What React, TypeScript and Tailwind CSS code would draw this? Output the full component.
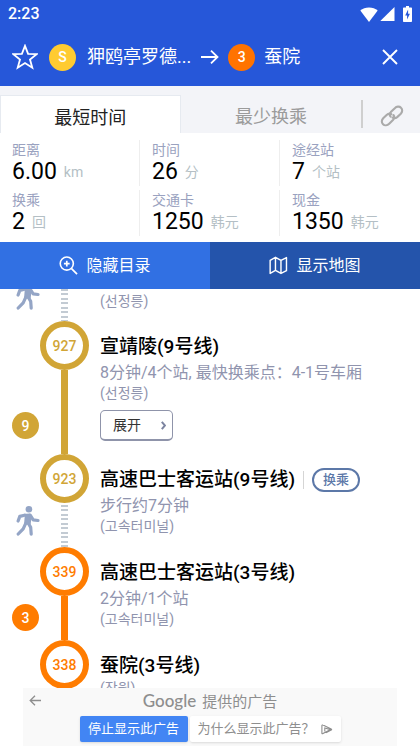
import { clsx } from "clsx";

const WifiIcon = () => (
  <svg width="18" height="15" viewBox="0 0 18 15" fill="currentColor" aria-label="Wi-Fi">
    <path d="M9 15L0.3 3.6C2.6 1.6 5.6 0.4 9 0.4C12.4 0.4 15.4 1.6 17.7 3.6L9 15Z" />
  </svg>
);

const SignalIcon = () => (
  <svg width="15" height="14" viewBox="0 0 15 14" fill="currentColor" aria-label="Signal">
    <path d="M14.5 0V14H0.3L14.5 0Z" />
  </svg>
);

const BatteryIcon = () => (
  <svg width="9" height="16" viewBox="0 0 9 16" aria-label="Battery">
    <path
      d="M3 0H6V1.6H8C8.6 1.6 9 2 9 2.6V15C9 15.6 8.6 16 8 16H1C0.4 16 0 15.6 0 15V2.6C0 2 0.4 1.6 1 1.6H3V0Z"
      fill="currentColor"
    />
    <path d="M5.1 3.6L2.2 9.4H4.1V13.4L6.9 7.7H5.1V3.6Z" fill="#2657d9" />
  </svg>
);

const StarIcon = () => (
  <svg width="26" height="26" viewBox="0 0 26 26" fill="none">
    <path
      d="M13 1.8L16.1 9.8L24.6 10.2L18 15.5L20.3 23.8L13 19.1L5.7 23.8L8 15.5L1.4 10.2L9.9 9.8L13 1.8Z"
      stroke="currentColor"
      strokeWidth="1.8"
    />
  </svg>
);

const ArrowIcon = ({ className }: { className?: string }) => (
  <svg width="18" height="14" viewBox="0 0 18 14" fill="none" className={className}>
    <path d="M0 7H16.5M10 0.7L16.5 7L10 13.3" stroke="currentColor" strokeWidth="1.8" />
  </svg>
);

const CloseIcon = () => (
  <svg width="16" height="16" viewBox="0 0 16 16" fill="none">
    <path d="M1 1L15 15M15 1L1 15" stroke="currentColor" strokeWidth="1.9" />
  </svg>
);

const LinkIcon = () => (
  <svg width="24" height="22" viewBox="0 0 24 22" fill="none">
    <g stroke="currentColor" strokeWidth="2.1" strokeLinecap="round">
      <path d="M10.6 11.6C9.4 10.2 9.6 8.4 10.8 7.1L14.8 3.2C16.6 1.3 19.4 1.1 21 2.7C22.7 4.3 22.5 6.9 20.8 8.7L17.2 12.1C15.8 13.3 13.9 13.5 12.6 12.7" />
      <path d="M13.4 10C14.6 11.5 14.4 13.4 13.2 14.7L9.2 18.7C7.4 20.5 4.6 20.8 3 19.2C1.3 17.6 1.5 15 3.2 13.2L6.6 9.9C8 8.6 9.9 8.3 11.3 9.1" />
    </g>
  </svg>
);

const ZoomInIcon = () => (
  <svg width="19" height="19" viewBox="0 0 20 20" fill="none">
    <circle cx="8.2" cy="8" r="6.9" stroke="currentColor" strokeWidth="1.7" />
    <path d="M13.2 13.2L19 19M8.2 5V11M5.2 8H11.2" stroke="currentColor" strokeWidth="1.8" />
  </svg>
);

const MapIcon = () => (
  <svg width="19" height="19" viewBox="0 0 20 20" fill="none">
    <path
      d="M1.2 4.6L6.8 1.4L12.6 4.6L18.4 1.6V15.4L12.6 18.4L6.8 15.2L1.2 18.4V4.6ZM6.8 1.4V15.2M12.6 4.6V18.4"
      stroke="currentColor"
      strokeWidth="1.5"
      strokeLinejoin="round"
    />
  </svg>
);

const WalkIcon = () => (
  <svg width="24" height="30" viewBox="0 0 24 30" fill="none" className="shrink-0 text-[#94a5c6]" aria-label="步行">
    <circle cx="12.9" cy="3.3" r="3.3" fill="currentColor" />
    <path d="M7 8L13.8 7.4L15.8 9.4L14.6 18.4L8 18.6L8.8 9.4Z" fill="currentColor" />
    <g stroke="currentColor" strokeWidth="3.2" strokeLinecap="round" strokeLinejoin="round">
      <path d="M8.6 9.2L3.8 10.4L2.1 15" />
      <path d="M14.2 9.2L17.2 13.9L22 14.5" />
      <path d="M9.6 17.6L7.2 22.8L2.2 28" />
      <path d="M12 16.8L14.7 21.4L15.2 28.2" />
    </g>
  </svg>
);

const AdChoicesIcon = () => (
  <svg width="12" height="11" viewBox="0 0 12 11" fill="none">
    <path
      d="M3.8 7.4V4L9.6 5.6L2 9.6C1.4 9.9 0.9 9.7 0.9 9.2V1.6C0.9 1 1.4 0.8 2 1.1L10.2 4.9C10.8 5.2 10.8 5.8 10.2 6.1L5 8.7"
      stroke="#8d8d8d"
      strokeWidth="1.1"
    />
  </svg>
);

const WalkTrack = () => (
  <span className="w-[7px] bg-[repeating-linear-gradient(to_bottom,#c3cbd3_0px_2px,#ffffff_2px_4px,#c3cbd3_4px_6px,#ffffff_6px_9px)]" />
);

const stats = [
  { label: "距离", value: "6.00", unit: "km" },
  { label: "时间", value: "26", unit: "分" },
  { label: "途经站", value: "7", unit: "个站" },
  { label: "换乘", value: "2", unit: "回" },
  { label: "交通卡", value: "1250", unit: "韩元" },
  { label: "现金", value: "1350", unit: "韩元" },
];

type Stop = {
  code: string;
  name: string;
  detail?: string;
  local: string;
  color: "gold" | "orange";
  line?: string;
  walk?: boolean;
  transfer?: boolean;
  expandable?: boolean;
};

const stops: Stop[] = [
  {
    code: "927",
    name: "宣靖陵(9号线)",
    detail: "8分钟/4个站, 最快换乘点：4-1号车厢",
    local: "(선정릉)",
    color: "gold",
    line: "9",
    expandable: true,
  },
  {
    code: "923",
    name: "高速巴士客运站(9号线)",
    detail: "步行约7分钟",
    local: "(고속터미널)",
    color: "gold",
    walk: true,
    transfer: true,
  },
  { code: "339", name: "高速巴士客运站(3号线)", detail: "2分钟/1个站", local: "(고속터미널)", color: "orange", line: "3" },
  { code: "338", name: "蚕院(3号线)", local: "(잠원)", color: "orange" },
];

const colors = {
  gold: { ring: "border-[#d1a536] text-[#d1a536]", fill: "bg-[#d1a536]" },
  orange: { ring: "border-[#ff7c00] text-[#ff7c00]", fill: "bg-[#ff7c00]" },
};

function StopRow({ stop }: { stop: Stop }) {
  const color = colors[stop.color];

  return (
    <li className={clsx("flex shrink-0", stop.expandable ? "h-[133px]" : "h-[93px]")}>
      {/* Line badge or walking man */}
      <div className={clsx("flex w-10 shrink-0 flex-col pl-3", stop.expandable ? "pt-[91px]" : stop.walk ? "pt-[52px]" : "pt-[57px]")}>
        {stop.line && (
          <span className={clsx("flex size-[27px] items-center justify-center rounded-full text-sm font-medium text-white", color.fill)}>
            {stop.line}
          </span>
        )}
        {stop.walk && (
          <span className="pl-1">
            <WalkIcon />
          </span>
        )}
      </div>

      {/* Track */}
      <div className="flex w-[49px] shrink-0 flex-col items-center">
        <span className={clsx("flex size-[49px] shrink-0 items-center justify-center rounded-full border-6 bg-white text-sm font-medium", color.ring)}>
          {stop.code}
        </span>
        {stop.line && <span className={clsx("w-[7px] flex-1", color.fill)} />}
        {stop.walk && (
          <span className="flex flex-1 pt-0.5">
            <WalkTrack />
          </span>
        )}
      </div>

      <div className="flex min-w-0 flex-1 flex-col items-start pt-3 pl-[11px] whitespace-nowrap text-[#9094ae]">
        <div className="flex items-center">
          <h2 className="text-[19px] leading-7 font-medium text-black">{stop.name}</h2>
          {stop.transfer && (
            <>
              <span className="mx-2 h-[18px] w-px bg-[#d5d5d5]" />
              <span className="flex h-6 w-12 items-center justify-center rounded-full border-2 border-[#5c78a8] text-[13px] font-medium text-[#5c78a8]">
                换乘
              </span>
            </>
          )}
        </div>
        {stop.detail && <p className="text-base leading-6">{stop.detail}</p>}
        <p className="text-sm leading-4">{stop.local}</p>
        {stop.expandable && (
          <button
            type="button"
            className="mt-[9px] flex h-[31px] w-[73px] items-center justify-between rounded-[5px] border border-b-2 border-[#8f94aa] bg-white pr-1.5 pl-3 text-sm text-[#333333]"
          >
            展开
            <svg width="5" height="9" viewBox="0 0 5 9" fill="none">
              <path d="M0.8 0.8L4 4.5L0.8 8.2" stroke="#7c84a0" strokeWidth="2" />
            </svg>
          </button>
        )}
      </div>
    </li>
  );
}

export default function App() {
  return (
    <div className="flex h-screen flex-col overflow-hidden bg-white font-[Roboto,'Noto_Sans_CJK_SC',sans-serif]">
      <header className="shrink-0 bg-[#2657d9] text-white">
        <div className="flex h-7 items-center justify-between px-2">
          <span className="text-base font-medium">2:23</span>
          <div className="flex items-center">
            <WifiIcon />
            <span className="mr-2 ml-0.5">
              <SignalIcon />
            </span>
            <BatteryIcon />
          </div>
        </div>
        <div className="flex h-[58px] items-center px-3 text-lg">
          <button type="button" aria-label="收藏">
            <StarIcon />
          </button>
          <span className="ml-[11px] flex size-[27px] shrink-0 items-center justify-center rounded-full bg-[#ffcb31] text-sm font-medium">S</span>
          <span className="ml-[11px] whitespace-nowrap">狎鸥亭罗德...</span>
          <ArrowIcon className="ml-2.5 shrink-0" />
          <span className="ml-[9px] flex size-[27px] shrink-0 items-center justify-center rounded-full bg-[#ff7300] text-sm font-medium">3</span>
          <span className="ml-[9px] whitespace-nowrap">蚕院</span>
          <button type="button" aria-label="关闭" className="mr-2.5 ml-auto">
            <CloseIcon />
          </button>
        </div>
      </header>

      <nav className="flex h-[47px] shrink-0 bg-[#f3f4f8] pt-[9px] text-lg">
        <button type="button" className="w-[43%] border border-b-0 border-[#e6eaf0] bg-white pt-1.5 text-[#222222]">
          最短时间
        </button>
        <button type="button" className="w-[43%] pt-1.5 text-[#9b9b9b]">
          最少换乘
        </button>
        <span className="mt-[5px] h-7 w-0.5 bg-[#cfcfcf]" />
        <button type="button" aria-label="链接" className="flex flex-1 items-center justify-center pt-1 text-[#aaaaaa]">
          <LinkIcon />
        </button>
      </nav>

      {/* Trip summary */}
      <dl className="grid h-[109px] shrink-0 grid-cols-3 content-start gap-y-1 pt-[7px]">
        {stats.map((s, i) => (
          <div key={s.label} className={clsx("h-[46px] pl-3", i % 3 < 2 && "border-r border-[#eeeeee]")}>
            <dt className="text-sm leading-5 text-[#9aa2c0]">{s.label}</dt>
            <dd className="flex items-center gap-[7px] text-[23px] leading-6 text-black">
              {s.value}
              <span className="text-sm leading-6 text-[#b4bfc5]">{s.unit}</span>
            </dd>
          </div>
        ))}
      </dl>

      <div className="grid h-[47px] shrink-0 grid-cols-2 text-base text-white">
        <button type="button" className="flex items-center justify-center gap-2 bg-[#3170e3]">
          <ZoomInIcon />
          隐藏目录
        </button>
        <button type="button" className="flex items-center justify-center gap-2 bg-[#2454ab]">
          <MapIcon />
          显示地图
        </button>
      </div>

      <main className="min-h-0 flex-1 overflow-hidden">
        <ol className="flex flex-col">
          {/* Tail of the previous transfer walk */}
          <li className="flex h-8">
            <div className="flex h-[21px] w-10 flex-col justify-end overflow-hidden pl-4">
              <WalkIcon />
            </div>
            <div className="flex w-[49px] justify-center">
              <WalkTrack />
            </div>
            <p className="pt-1 pl-[11px] text-sm leading-4 text-[#9094ae]">(선정릉)</p>
          </li>
          {stops.map((stop) => (
            <StopRow key={stop.code} stop={stop} />
          ))}
        </ol>
      </main>

      {/* Ad feedback */}
      <footer className="mx-[23px] h-[58px] shrink-0 bg-[#f9f9f9] text-[#8e8e8e]">
        <div className="grid h-6 grid-cols-[1fr_auto_1fr] items-center">
          <button type="button" aria-label="返回" className="pl-1.5">
            <svg width="12" height="11" viewBox="0 0 12 11" fill="none">
              <path d="M12 5.5H1.2M6 0.7L1.2 5.5L6 10.3" stroke="currentColor" strokeWidth="1.3" />
            </svg>
          </button>
          <p className="flex items-baseline gap-1.5 text-[15px]">
            <span className="font-[Lato,sans-serif] text-[17px] font-medium">Google</span>
            提供的广告
          </p>
        </div>
        <div className="flex justify-center gap-0.5 pt-1 text-[13px]">
          <button type="button" className="h-[26px] w-[108px] rounded-xs bg-[#4285f4] text-white shadow">
            停止显示此广告
          </button>
          <button type="button" className="flex h-[26px] w-[151px] items-center justify-between rounded-xs bg-white px-2 whitespace-nowrap shadow">
            为什么显示此广告？
            <AdChoicesIcon />
          </button>
        </div>
      </footer>
    </div>
  );
}
